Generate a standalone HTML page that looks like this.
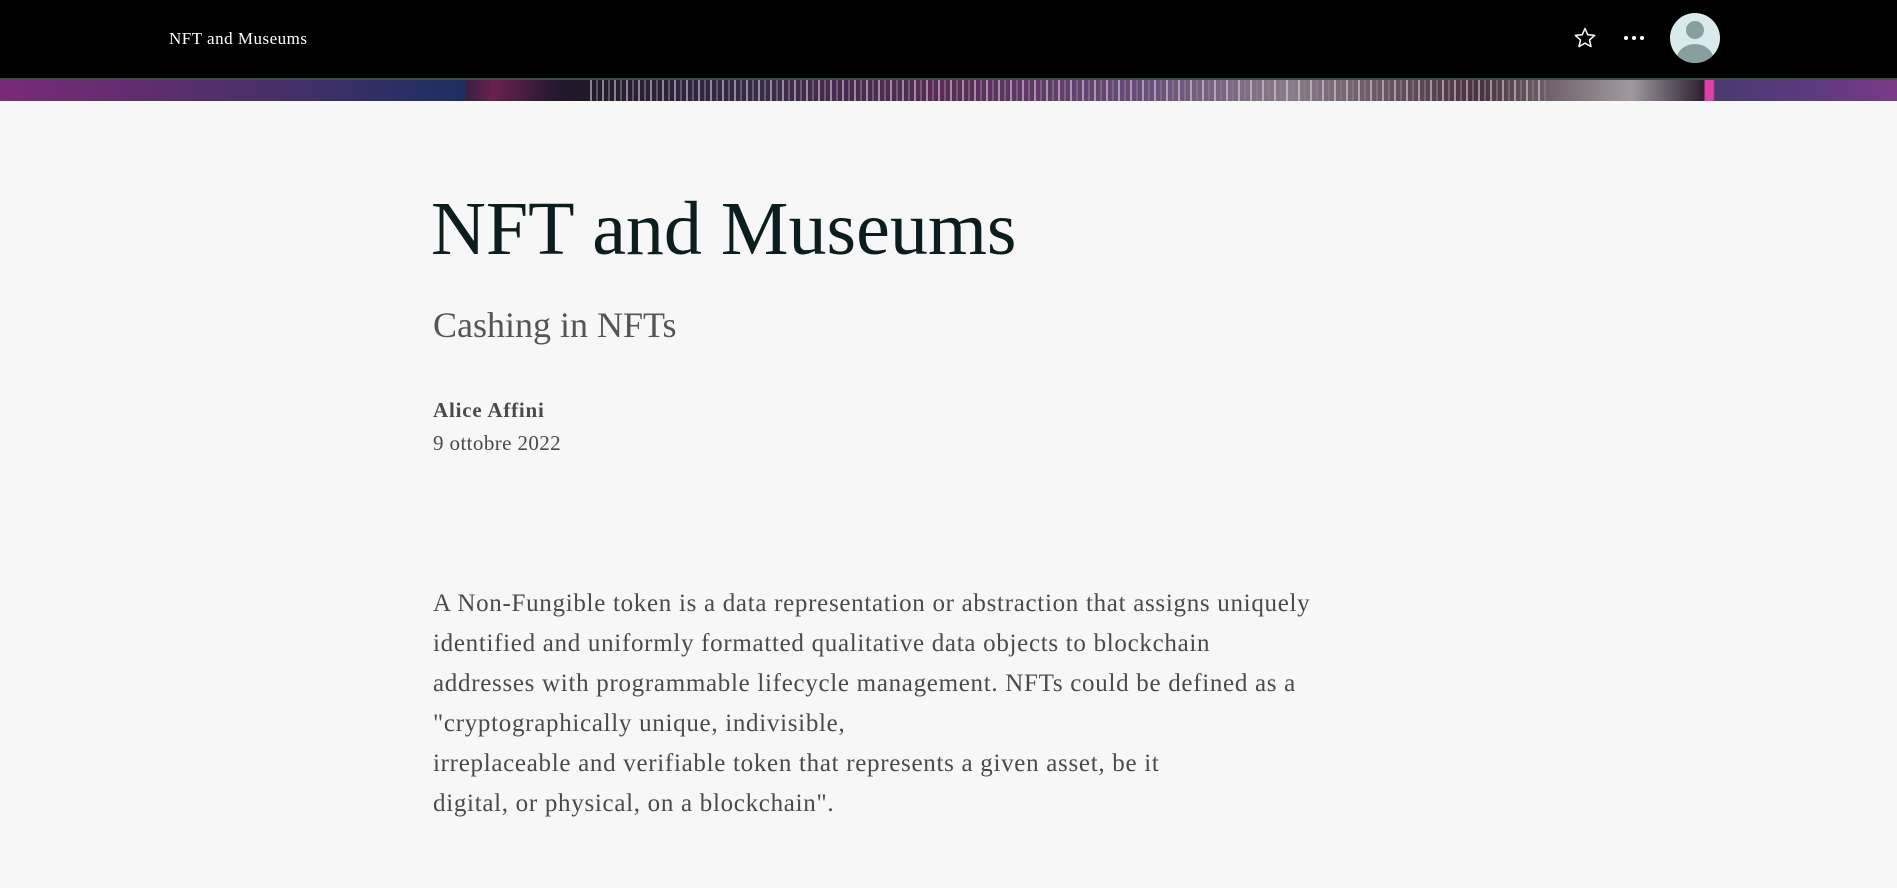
<!DOCTYPE html>
<html><head><meta charset="utf-8"><style>
html,body{margin:0;padding:0;width:1897px;height:888px;overflow:hidden;background:#f7f7f7;font-family:"Liberation Serif",serif;}
.top{position:absolute;left:0;top:0;width:1897px;height:78px;background:#000;}
.top .t{position:absolute;left:169px;top:29px;color:#fff;font-size:17px;letter-spacing:0.5px;}
.banner{position:absolute;left:0;top:78px;width:1897px;height:23px;border-top:2px solid #3a4a4a;box-sizing:border-box;
background:linear-gradient(90deg,#7a2a78 0%,#4a2f6a 14%,#1c2f62 24.5%,#3a2040 24.6%,#6a2050 26%,#2a1a30 29%,#201828 30%,#3a2a4a 40%,#5a2a5a 50%,#6a4a7a 60%,#8a7a8a 68%,#4a3040 78%,#a09aa0 86%,#2a2030 89.8%,#e040a8 89.9%,#e040a8 90.3%,#4a3a70 90.4%,#5a3a80 95%,#7a3a88 100%);}
.pix{position:absolute;left:590px;top:80px;width:960px;height:21px;opacity:.55;
background:repeating-linear-gradient(90deg,#ddd 0 2px,transparent 2px 6px,#888 6px 8px,transparent 8px 12px);}
.title{position:absolute;left:431px;top:184px;font-size:76px;color:#0c1d1d;white-space:nowrap;line-height:1.2;}
.sub{position:absolute;left:433px;top:304px;font-size:36px;color:#555;white-space:nowrap;}
.author{position:absolute;left:433px;top:398px;font-size:21px;font-weight:bold;color:#4a4a4a;letter-spacing:0.8px;}
.date{position:absolute;left:433px;top:431px;font-size:21px;color:#4a4a4a;letter-spacing:0.4px;}
.body{position:absolute;left:433px;top:584px;width:1000px;font-size:25px;line-height:40px;color:#4a4a4a;letter-spacing:0.7px;white-space:nowrap;}
</style></head><body>
<div class="top"><div class="t">NFT and Museums</div>
<svg style="position:absolute;left:1573px;top:26px" width="24" height="24" viewBox="0 0 24 24"><path d="M12 2.5l2.8 6.3 6.8.6-5.1 4.5 1.5 6.7L12 17.1l-6 3.5 1.5-6.7-5.1-4.5 6.8-.6z" fill="none" stroke="#fff" stroke-width="1.5" stroke-linejoin="round"/></svg>
<svg style="position:absolute;left:1622px;top:33px" width="26" height="10"><circle cx="4" cy="5" r="2" fill="#fff"/><circle cx="12" cy="5" r="2" fill="#fff"/><circle cx="20" cy="5" r="2" fill="#fff"/></svg>
<svg style="position:absolute;left:1670px;top:13px" width="50" height="50" viewBox="0 0 50 50"><defs><clipPath id="c"><circle cx="25" cy="25" r="25"/></clipPath></defs><circle cx="25" cy="25" r="25" fill="#d8eaea"/><g clip-path="url(#c)" fill="#889f9f"><circle cx="25" cy="17" r="9"/><ellipse cx="25" cy="48" rx="19" ry="17"/></g></svg>
</div>
<div class="banner"></div><div class="pix"></div>
<div class="title">NFT and Museums</div>
<div class="sub">Cashing in NFTs</div>
<div class="author">Alice Affini</div>
<div class="date">9 ottobre 2022</div>
<div class="body">A Non-Fungible token is a data representation or abstraction that assigns uniquely<br>identified and uniformly formatted qualitative data objects to blockchain<br>addresses with programmable lifecycle management. NFTs could be defined as a<br>"cryptographically unique, indivisible,<br>irreplaceable and verifiable token that represents a given asset, be it<br>digital, or physical, on a blockchain".</div>
</body></html>
